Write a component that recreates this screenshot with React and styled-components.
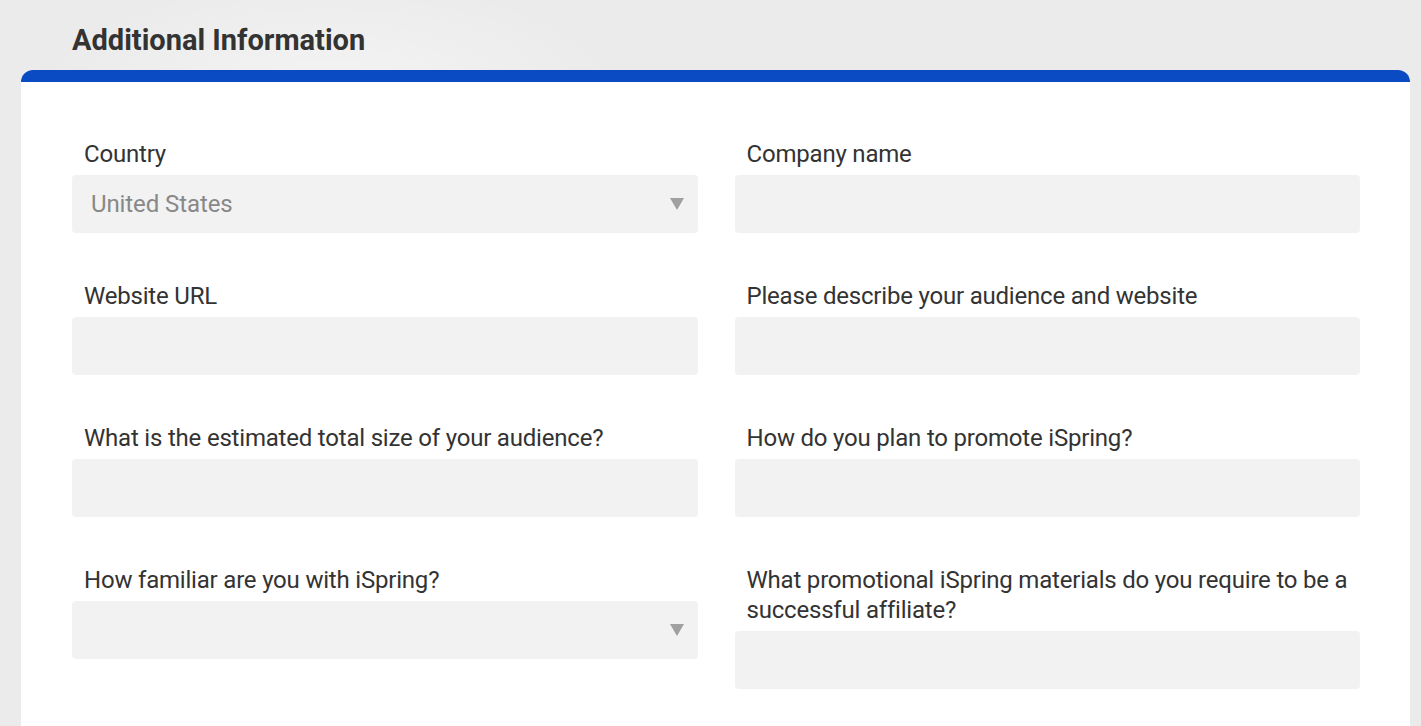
import React from "react"
import styled, { createGlobalStyle } from "styled-components"

const GlobalStyle = createGlobalStyle`
    html, body {
        margin: 0;
        padding: 0;
        background: #ebebeb;
        font-family: Roboto, "Liberation Sans", sans-serif;
        overflow: hidden;
    }
`

const Page = styled.div`
    height: 726px;
    padding: 24px 11px 0 21px;
    box-sizing: border-box;
    overflow: hidden;
    background:
        radial-gradient(ellipse 420px 160px at 330px 90px, rgba(255,255,255,.45), rgba(255,255,255,0) 70%),
        #ebebeb;
`

const Title = styled.h2`
    margin: 0 0 14px 51px;
    font-size: 29px;
    line-height: 32px;
    font-weight: 700;
    color: #333;
`

const Card = styled.div`
    background: #fff;
    border-top: 12px solid #0a4bc4;
    border-radius: 12px 12px 0 0;
    padding: 57px 50px 60px 51px;
    min-height: 600px;
`

const Grid = styled.div`
    display: grid;
    grid-template-columns: 1fr 1fr;
    column-gap: 37px;
    row-gap: 48px;
`

const Field = styled.div`
    display: flex;
    flex-direction: column;
    gap: 6px;
`

const Label = styled.label`
    padding-left: 12px;
    font-size: 24px;
    line-height: 30px;
    color: #333;
    letter-spacing: -0.2px;
`

const Box = styled.div`
    position: relative;
    height: 58px;
    border-radius: 4px;
    background: #f2f2f2;
    display: flex;
    align-items: center;
    padding: 0 19px;
    font-size: 24px;
    color: #888;
    letter-spacing: -0.1px;
`

const Arrow = styled.span`
    position: absolute;
    right: 14px;
    top: 23px;
    width: 0;
    height: 0;
    border-left: 7px solid transparent;
    border-right: 7px solid transparent;
    border-top: 12px solid #a0a0a0;
`

const fields = [
    { label: "Country", value: "United States", select: true },
    { label: "Company name" },
    { label: "Website URL" },
    { label: "Please describe your audience and website" },
    { label: "What is the estimated total size of your audience?" },
    { label: "How do you plan to promote iSpring?" },
    { label: "How familiar are you with iSpring?", select: true },
    { label: "What promotional iSpring materials do you require to be a successful affiliate?" },
]

export default function App() {
    return (
        <>
            <GlobalStyle />
            <Page>
                <Title>Additional Information</Title>
                <Card>
                    <Grid>
                        {fields.map((f) => (
                            <Field key={f.label}>
                                <Label>{f.label}</Label>
                                <Box>
                                    {f.value}
                                    {f.select && <Arrow />}
                                </Box>
                            </Field>
                        ))}
                    </Grid>
                </Card>
            </Page>
        </>
    )
}
